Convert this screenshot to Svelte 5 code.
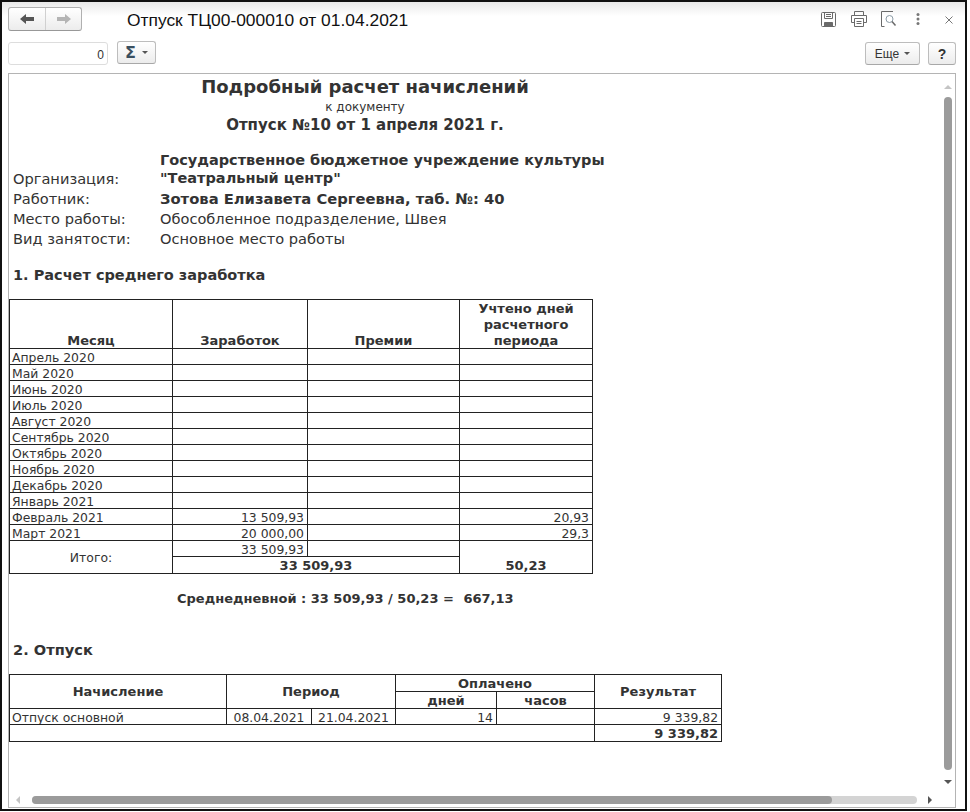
<script>
  const months = ['Апрель 2020','Май 2020','Июнь 2020','Июль 2020','Август 2020','Сентябрь 2020','Октябрь 2020','Ноябрь 2020','Декабрь 2020','Январь 2021'];
</script>

<div class="win">
  <header class="head">
    <div class="navgroup">
      <button class="nav first" aria-label="Назад">
        <svg width="14" height="10" viewBox="0 0 14 10"><path d="M0 5 6 0v3h8v4H6v3z" fill="#555"/></svg>
      </button>
      <button class="nav" aria-label="Вперед">
        <svg width="14" height="10" viewBox="0 0 14 10"><path d="M14 5 8 0v3H0v4h8v3z" fill="#b4b4b4"/></svg>
      </button>
    </div>
    <div class="title">Отпуск ТЦ00-000010 от 01.04.2021</div>
    <div class="tools">
      <svg class="t1" width="15" height="15" viewBox="0 0 15 15" fill="none" stroke="#6a6a6a"><path d="M1.500.5h12a1 1 0 0 1 1 1v12a1 1 0 0 1-1 1h-12a1 1 0 0 1-1-1v-12a1 1 0 0 1 1-1z"/><path d="M3.500.5v6h8v-6M5 2.500h5M5 4.500h5"/><path d="M3.500 14.500v-4h8v4" fill="#6a6a6a"/></svg>
      <svg class="t2" width="16" height="16" viewBox="0 0 16 16" fill="none" stroke="#6a6a6a"><path d="M3.500 4.500v-4h9v4M3.500 11.500h-3v-7h15v7h-3"/><path d="M3.500 7.500h9v8h-9zM5.500 10.500h5M5.500 12.500h5"/></svg>
      <svg class="t3" width="16" height="16" viewBox="0 0 16 16" fill="none" stroke="#6a6a6a"><path d="M12 .5H.5v15h3"/><circle cx="8.500" cy="8" r="3.500" stroke="#8a9aa5"/><path d="m11 10.500 3.500 4" stroke-width="1.500"/></svg>
      <svg class="t4" width="4" height="12" viewBox="0 0 4 12" fill="#777"><circle cx="2" cy="1.500" r="1.500"/><circle cx="2" cy="6" r="1.500"/><circle cx="2" cy="10.500" r="1.500"/></svg>
      <svg class="t5" width="8" height="8" viewBox="0 0 8 8" stroke="#777" fill="none"><path d="m.5.5 7 7M7.500.5l-7 7"/></svg>
    </div>
  </header>

  <div class="bar">
    <div class="num">0</div>
    <button class="btn sigma"><span class="sg">Σ</span><i class="caret"></i></button>
    <div class="spacer"></div>
    <button class="btn more">Еще<i class="caret"></i></button>
    <button class="btn help">?</button>
  </div>

  <main class="sheet">
    <div class="doc">
      <div class="center">
        <div class="h1">Подробный расчет начислений</div>
        <div class="sub">к документу</div>
        <div class="h3">Отпуск №10 от 1 апреля 2021 г.</div>
      </div>

      <div class="info">
        <div class="lab">Организация:</div>
        <div class="val b">Государственное бюджетное учреждение культуры<br />"Театральный центр"</div>
        <div class="lab">Работник:</div>
        <div class="val b big">Зотова Елизавета Сергеевна, таб. №: 40</div>
        <div class="lab">Место работы:</div>
        <div class="val">Обособленное подразделение, Швея</div>
        <div class="lab">Вид занятости:</div>
        <div class="val">Основное место работы</div>
      </div>

      <h2 class="s1">1. Расчет среднего заработка</h2>

      <table class="t-a">
        <colgroup><col class="a1" /><col class="a2" /><col class="a3" /><col class="a4" /></colgroup>
        <tbody>
          <tr class="hrow">
            <th><span class="cap">Месяц</span></th>
            <th><span class="cap">Заработок</span></th>
            <th><span class="cap">Премии</span></th>
            <th><span class="cap">Учтено дней<br />расчетного<br />периода</span></th>
          </tr>
          {#each months as m}
            <tr><td>{m}</td><td></td><td></td><td></td></tr>
          {/each}
          <tr><td>Февраль 2021</td><td class="r">13 509,93</td><td></td><td class="r">20,93</td></tr>
          <tr><td>Март 2021</td><td class="r">20 000,00</td><td></td><td class="r">29,3</td></tr>
          <tr>
            <td rowspan="2" class="c itogo">Итого:</td>
            <td class="r">33 509,93</td><td></td>
            <td rowspan="2" class="tot50">50,23</td>
          </tr>
          <tr class="sum"><td colspan="2" class="c b">33 509,93</td></tr>
        </tbody>
      </table>

      <div class="avg">Среднедневной : 33 509,93 / 50,23 = <span class="res">667,13</span></div>

      <h2 class="s2">2. Отпуск</h2>

      <table class="t-b">
        <colgroup><col class="b1" /><col class="b2" /><col class="b3" /><col class="b4" /><col class="b5" /><col class="b6" /></colgroup>
        <tbody>
          <tr class="r17">
            <th rowspan="2" class="mid">Начисление</th>
            <th rowspan="2" colspan="2" class="mid">Период</th>
            <th colspan="2">Оплачено</th>
            <th rowspan="2" class="mid">Результат</th>
          </tr>
          <tr class="r17"><th>дней</th><th>часов</th></tr>
          <tr><td>Отпуск основной</td><td class="c">08.04.2021</td><td class="c">21.04.2021</td><td class="r">14</td><td></td><td class="r">9 339,82</td></tr>
          <tr class="total"><td colspan="5"></td><td class="r b">9 339,82</td></tr>
        </tbody>
      </table>
    </div>

    <div class="vs">
      <i class="arr up"></i>
      <div class="vthumb"></div>
      <i class="arr down"></i>
    </div>
    <div class="hs">
      <i class="arr left"></i>
      <div class="hthumb"><div class="hdark"></div></div>
      <i class="arr right"></i>
    </div>
  </main>
</div>

<style>
  :global(body) { margin: 0; background: #fff; }
  .win {
    box-sizing: border-box;
    width: 967px; height: 811px;
    border: 2px solid #111;
    display: flex; flex-direction: column;
    background: #fff;
    overflow: hidden;
    font-family: "DejaVu Sans", Verdana, sans-serif;
    color: #333;
  }
  button { font: inherit; padding: 0; margin: 0; cursor: default; }
  .head {
    height: 34px; flex: none;
    display: flex; align-items: flex-start;
    background: linear-gradient(#e9e9e9, #fff 14px);
    padding: 5px 0 0 6px;
    box-sizing: border-box;
  }
  .navgroup {
    display: flex; width: 74px; height: 24px; flex: none;
    border: 1px solid #b0b0b0; border-radius: 3px;
    border-bottom-color: #989898;
    box-sizing: border-box;
    background: linear-gradient(#fff, #ececec);
  }
  .nav { flex: 1; border: 0; background: none; display: flex; align-items: center; justify-content: center; }
  .nav.first { border-right: 1px solid #d0d0d0; flex: 0 0 37px; }
  .title {
    margin-left: 45px; margin-top: 2px;
    font: 17.4px/22px "Liberation Sans", Arial, sans-serif;
    color: #111;
  }
  .tools { margin-left: auto; position: relative; width: 144px; height: 24px; flex: none; }
  .tools svg { position: absolute; }
  .t1 { left: 0; top: 5px; }
  .t2 { left: 30px; top: 4px; }
  .t3 { left: 60px; top: 4px; }
  .t4 { left: 95px; top: 6px; }
  .t5 { left: 124px; top: 9px; }

  .bar {
    height: 37px; flex: none; box-sizing: border-box;
    display: flex; align-items: flex-start;
    padding: 5px 9px 0 6px;
    font-family: "Liberation Sans", Arial, sans-serif;
    font-size: 12px; color: #333;
  }
  .num {
    box-sizing: border-box; width: 100px; height: 23px; margin-top: 1px;
    border: 1px solid #ddd; border-radius: 3px;
    text-align: right; padding: 4px 3px 0 0; line-height: 16px;
  }
  .btn {
    box-sizing: border-box; height: 23px;
    border: 1px solid #bdbdbd; border-radius: 3px; border-bottom-color: #a8a8a8;
    background: linear-gradient(#fff, #ececec);
    color: #333; display: flex; align-items: center; justify-content: center;
    font-size: 12px;
  }
  .sigma { width: 39px; margin-left: 9px; gap: 6px; }
  .sg { font: bold 16px/20px "DejaVu Sans", sans-serif; color: #3a4f5f; }
  .caret { width: 0; height: 0; border: 3px solid transparent; border-top-color: #555; border-bottom: 0; display: block; }
  .spacer { flex: 1; }
  .more { width: 55px; gap: 5px; margin-top: 1px; }
  .btn.help { width: 28px; margin-left: 8px; margin-top: 1px; font-weight: bold; font-size: 14px; }

  .sheet {
    position: relative;
    box-sizing: border-box;
    margin: 0 9px 0 6px;
    height: 735px; flex: none;
    border: 1px solid #b4b4b4;
    overflow: hidden;
  }
  .doc { width: 712px; font-size: 13px; line-height: 16px; color: #333; }
  .center { text-align: center; padding-top: 1px; }
  .h1 { font-weight: bold; font-size: 18px; line-height: 24px; }
  .sub { font-size: 12px; line-height: 14px; margin-top: 1px; }
  .h3 { font-weight: bold; font-size: 15px; line-height: 20px; margin-top: 1px; }
  .info {
    display: grid; grid-template-columns: 147px 1fr;
    padding-left: 4px; margin-top: 16px;
    row-gap: 4px; font-size: 14.6px; line-height: 16px;
  }
  .lab { align-self: end; }
  .b { font-weight: bold; }
  .val.b { line-height: 18px; font-size: 14.5px; }
  .val.big { font-size: 14.75px; line-height: 16px; }
  h2 { margin: 0; font-size: 14.5px; font-weight: bold; line-height: 18px; padding-left: 4px; }
  .s1 { margin-top: 19px; }
  .s2 { margin-top: 34px; font-size: 14.6px; }
  table { border-collapse: collapse; table-layout: fixed; font-size: 12.4px; }
  th, td {
    border: 1px solid #222; padding: 0 2px; height: 15px; line-height: 15px;
    font-weight: normal; overflow: hidden; white-space: nowrap;
  }
  td { padding-top: 3px; height: 12px; line-height: 12px; }
  th { font-weight: bold; font-size: 13px; text-align: center; vertical-align: bottom; }
  th.mid { vertical-align: middle; }
  .t-a { margin-top: 15px; width: 584px; }
  .a1 { width: 163px; } .a2 { width: 135px; } .a3 { width: 152px; } .a4 { width: 133px; }
  .hrow th { height: 48px; line-height: 16px; }
  .cap { display: block; margin-bottom: -1px; }
  .r { text-align: right; padding-right: 3px; }
  .c { text-align: center; }
  td.itogo { vertical-align: middle; padding-top: 1px; line-height: 15px; }
  td.tot50 { text-align: center; font-weight: bold; font-size: 13px; vertical-align: bottom; padding-top: 0; line-height: 15px; }
  td.b { font-size: 13px; font-weight: bold; padding-top: 1px; line-height: 15px; height: 15px; }
  .avg { font-weight: bold; font-size: 13px; line-height: 16px; margin-top: 17px; padding-left: 168px; white-space: nowrap; }
  .res { margin-left: 5px; }
  .t-b { margin-top: 15px; width: 713px; }
  .b1 { width: 217px; } .b2 { width: 85px; } .b3 { width: 84px; } .b4 { width: 101px; } .b5 { width: 98px; } .b6 { width: 127px; }
  .r17 th { height: 16px; }
  .total td { height: 16px; padding-top: 0; line-height: 16px; }
  .total td.b { height: 15px; padding-top: 1px; line-height: 15px; }

  .vs { position: absolute; right: 0; top: 0; bottom: 16px; width: 18px; }
  .vthumb { position: absolute; left: 7px; top: 23px; width: 8px; height: 673px; border-radius: 4px; background: #9b9b9b; }
  .hs { position: absolute; left: 0; right: 0; bottom: 0; height: 16px; }
  .hthumb { position: absolute; left: 23px; top: 5px; width: 885px; height: 8px; border-radius: 4px; background: #d4d4d4; }
  .hdark { width: 800px; height: 8px; border-radius: 4px; background: #9b9b9b; }
  .arr { position: absolute; width: 0; height: 0; border: 4px solid transparent; display: block; }
  .up { left: 7px; top: 11px; border-top: 0; border-bottom-color: #c4c4c4; }
  .down { left: 7px; top: 706px; border-bottom: 0; border-top-color: #555; }
  .left { left: 7px; top: 5px; border-left: 0; border-right-color: #c4c4c4; }
  .right { left: 919px; top: 5px; border-right: 0; border-left-color: #555; }
</style>
